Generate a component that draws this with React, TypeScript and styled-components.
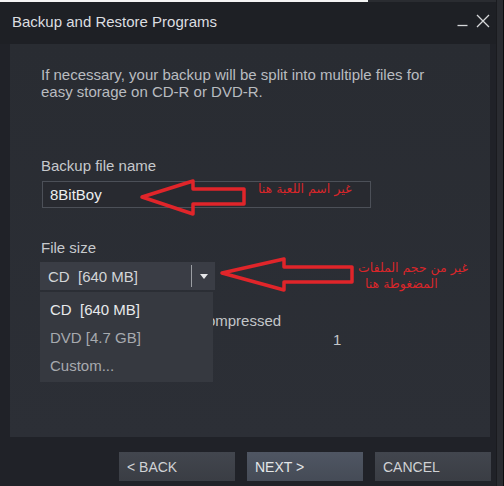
import React, { useState } from 'react';
import styled, { createGlobalStyle } from 'styled-components';

const GlobalStyle = createGlobalStyle`
  html, body {
    margin: 0;
    padding: 0;
    background: #ffffff;
  }
  body {
    font-family: 'Liberation Sans', Arial, sans-serif;
    width: 504px;
    height: 486px;
    overflow: hidden;
  }
`;

interface OptionStyle {
  active: boolean;
}

interface ButtonStyle {
  primary?: boolean;
}

const Frame = styled.div`
  position: relative;
  display: flex;
  width: 504px;
  height: 486px;
`;

const Window = styled.div`
  display: flex;
  flex-direction: column;
  width: 496px;
  height: 486px;
  background: #202228;
`;

const RightEdge = styled.div`
  width: 6px;
  background: #2a2c31;
  border-right: 1px solid #0c0c0e;
  border-left: 1px solid #1a1b1f;
`;

const TopStrip = styled.div`
  display: flex;
  height: 2px;
  & > div:first-child {
    width: 368px;
    background: #f4f4f4;
  }
  & > div:last-child {
    flex: 1;
    background: #2a2c31;
  }
`;

const TitleBar = styled.div`
  display: flex;
  align-items: center;
  justify-content: space-between;
  height: 42px;
  padding: 0 6px 0 12px;
  background: #1e2025;
`;

const Title = styled.div`
  font-size: 15px;
  color: #dcdee0;
  margin-top: -3px;
`;

const WinControls = styled.div`
  display: flex;
  align-items: center;
  gap: 8px;
  margin-top: -4px;
`;

const Panel = styled.div`
  flex: 1;
  margin: 0 6px 0 10px;
  padding: 22px 0 0 31px;
  background: linear-gradient(#292c32, #2c2f36);
  color: #c3c6c9;
  font-size: 15px;
`;

const Intro = styled.p`
  margin: 0;
  line-height: 17px;
  color: #b9bcc0;
`;

const FieldLabel = styled.div<{ gap: number }>`
  margin-top: ${(props) => props.gap}px;
  line-height: 17px;
  color: #c6c9cc;
`;

const TextInput = styled.div`
  box-sizing: border-box;
  width: 329px;
  height: 27px;
  margin: 7px 0 0 1px;
  padding: 0 7px;
  display: flex;
  align-items: center;
  border: 1px solid #4c5058;
  background: #282a30;
  color: #eceeef;
`;

const SelectWrap = styled.div`
  position: relative;
  width: 175px;
  margin: 6px 0 0 -1px;
`;

const SelectBox = styled.div`
  box-sizing: border-box;
  height: 28px;
  display: flex;
  align-items: center;
  padding-left: 8px;
  background: #3a3d45;
  color: #d3d5d8;
`;

const SelectValue = styled.div`
  flex: 1;
  white-space: pre;
`;

const SelectDivider = styled.div`
  width: 1px;
  height: 22px;
  background: #9b9ea3;
  margin-right: 8px;
`;

const SelectArrow = styled.div`
  width: 0;
  height: 0;
  border-left: 4px solid transparent;
  border-right: 4px solid transparent;
  border-top: 5px solid #e6e7e9;
  margin-right: 7px;
`;

const Menu = styled.div`
  position: absolute;
  top: 30px;
  left: 0;
  width: 173px;
  height: 90px;
  padding-top: 4px;
  box-sizing: border-box;
  background: #363940;
  z-index: 2;
`;

const Option = styled.div<OptionStyle>`
  height: 28px;
  line-height: 28px;
  padding-left: 10px;
  white-space: pre;
  color: ${(props) => (props.active ? '#e8e9eb' : '#a7aaaf')};
`;

const InfoGrid = styled.div`
  display: grid;
  grid-template-columns: 292px auto;
  row-gap: 2px;
  margin-top: 22px;
  line-height: 17px;
  color: #c3c6c9;
  white-space: nowrap;
`;

const Footer = styled.div`
  display: flex;
  justify-content: flex-end;
  gap: 12px;
  height: 49px;
  padding: 15px 5px 0 0;
  box-sizing: border-box;
`;

const Button = styled.div<ButtonStyle>`
  box-sizing: border-box;
  width: 116px;
  height: 29px;
  padding-left: 8px;
  display: flex;
  align-items: center;
  font-size: 14px;
  color: ${(props) => (props.primary ? '#e4e6e8' : '#d0d2d5')};
  background: ${(props) =>
    props.primary
      ? 'linear-gradient(#4f5663, #454b56)'
      : 'linear-gradient(#42464e, #3a3d44)'};
`;

const Annotations = styled.svg`
  position: absolute;
  left: 0;
  top: 0;
  pointer-events: none;
`;

const Note = styled.div<{ x: number; y: number }>`
  position: absolute;
  left: ${(props) => props.x}px;
  top: ${(props) => props.y}px;
  direction: rtl;
  text-align: left;
  font-family: 'DejaVu Sans', sans-serif;
  font-size: 12.5px;
  line-height: 16px;
  color: #d8262a;
  white-space: nowrap;
  & > span {
    display: block;
    padding-left: 7px;
  }
`;

const sizes = ['CD  [640 MB]', 'DVD [4.7 GB]', 'Custom...'];

export default function App() {
  const [fileName] = useState('8BitBoy');
  const [selected] = useState(0);

  return (
    <>
      <GlobalStyle />
      <Frame>
        <Window>
          <TopStrip>
            <div />
            <div />
          </TopStrip>
          <TitleBar>
            <Title>Backup and Restore Programs</Title>
            <WinControls>
              <svg width="11" height="14" viewBox="0 0 11 14">
                <path d="M0.5 11.5 H10.5" stroke="#d6d8da" strokeWidth="1.3" />
              </svg>
              <svg width="14" height="14" viewBox="0 0 14 14">
                <path
                  d="M1 1 L13 13 M13 1 L1 13"
                  stroke="#d6d8da"
                  strokeWidth="1.3"
                />
              </svg>
            </WinControls>
          </TitleBar>
          <Panel>
            <Intro>
              If necessary, your backup will be split into multiple files for
              <br />
              easy storage on CD-R or DVD-R.
            </Intro>
            <FieldLabel gap={57}>Backup file name</FieldLabel>
            <TextInput>{fileName}</TextInput>
            <FieldLabel gap={31}>File size</FieldLabel>
            <SelectWrap>
              <SelectBox>
                <SelectValue>{sizes[selected]}</SelectValue>
                <SelectDivider />
                <SelectArrow />
              </SelectBox>
              <Menu>
                {sizes.map((s, i) => (
                  <Option key={s} active={i === selected}>
                    {s}
                  </Option>
                ))}
              </Menu>
            </SelectWrap>
            <InfoGrid>
              <div>Estimated backup size, compressed</div>
              <div />
              <div>Number of backup files</div>
              <div>1</div>
            </InfoGrid>
          </Panel>
          <Footer>
            <Button>&lt; BACK</Button>
            <Button primary>NEXT &gt;</Button>
            <Button>CANCEL</Button>
          </Footer>
        </Window>
        <RightEdge />
        <Annotations width="504" height="486" viewBox="0 0 504 486">
          <path
            d="M142 197 L193 181 L193 189 L244 189 L244 204 L193 204 L193 214 Z"
            fill="none"
            stroke="#e0252a"
            strokeWidth="3.5"
            strokeLinejoin="round"
          />
          <path
            d="M222 273 L284 259 L284 267 L352 267 L352 282 L284 282 L284 290 Z"
            fill="none"
            stroke="#e0252a"
            strokeWidth="3.5"
            strokeLinejoin="round"
          />
        </Annotations>
        <Note x={258} y={181}>
          غير اسم اللعبة هنا
        </Note>
        <Note x={358} y={260}>
          غير من حجم الملفات
          <span>المضغوطة هنا</span>
        </Note>
      </Frame>
    </>
  );
}
